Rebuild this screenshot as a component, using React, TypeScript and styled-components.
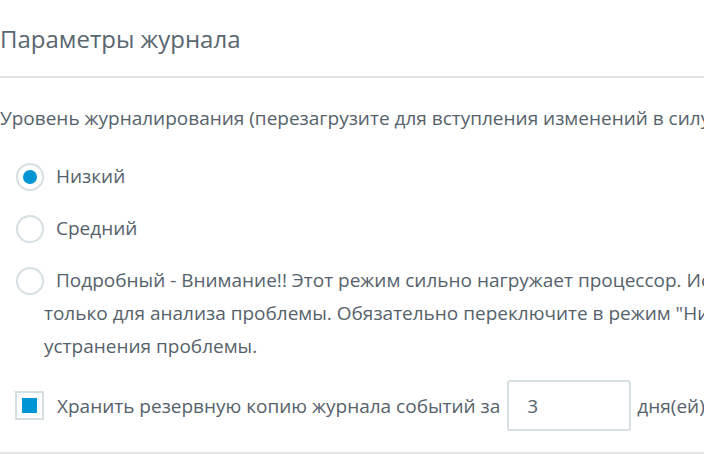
import styled, { createGlobalStyle } from "styled-components";

const GlobalStyle = createGlobalStyle`
  html, body {
    margin: 0;
    padding: 0;
    background: #ffffff;
    overflow: hidden;
  }
  body {
    font-family: "Open Sans", "Noto Sans", sans-serif;
    color: #56626b;
  }
`;

const Page = styled.div`
  width: 1000px;
`;

const Header = styled.div`
  height: 76px;
  display: flex;
  align-items: center;
  border-bottom: 2px solid #e4e4e4;
`;

const Title = styled.h1`
  margin: 0;
  font-size: 24px;
  font-weight: 400;
  color: #5a6670;
`;

const Body = styled.div`
  padding: 24px 0 0 0;
  height: 350px;
  border-bottom: 2px solid #e6e6e6;
`;

const Caption = styled.div`
  font-size: 19px;
  line-height: 32px;
  white-space: nowrap;
`;

const Options = styled.div`
  display: flex;
  flex-direction: column;
  gap: 19px;
  margin-top: 26px;
  padding-left: 16px;
`;

const Option = styled.label`
  display: flex;
  align-items: flex-start;
  gap: 12px;
  font-size: 19px;
  line-height: 33px;
`;

const Radio = styled.span<{ $checked?: boolean }>`
  flex: none;
  box-sizing: border-box;
  width: 28px;
  height: 28px;
  margin-top: 3px;
  border-radius: 50%;
  border: 2px solid #d6dfe2;
  display: flex;
  align-items: center;
  justify-content: center;

  &::after {
    content: "";
    width: 14px;
    height: 14px;
    border-radius: 50%;
    background: ${({ $checked }) => ($checked ? "#0096d6" : "transparent")};
  }
`;

const LongText = styled.span`
  margin-left: -12px;
  white-space: nowrap;
`;

const Indent = styled.span`
  padding-left: 12px;
`;

const BackupRow = styled.div`
  display: flex;
  align-items: center;
  margin-top: 17px;
  padding-left: 15px;
  font-size: 19px;
  white-space: nowrap;
`;

const Checkbox = styled.span`
  flex: none;
  box-sizing: border-box;
  width: 29px;
  height: 29px;
  border: 2px solid #d6dfe2;
  display: flex;
  align-items: center;
  justify-content: center;
  margin-right: 13px;

  &::after {
    content: "";
    width: 15px;
    height: 15px;
    background: #0096d6;
  }
`;

const DaysInput = styled.input`
  flex: none;
  box-sizing: border-box;
  width: 124px;
  height: 51px;
  margin: 0 6px 0 7px;
  padding: 0 18px;
  border: 2px solid #d6dfe2;
  border-radius: 3px;
  font-family: inherit;
  font-size: 19px;
  color: #56626b;
  outline: none;
`;

export default function App() {
  return (
    <>
      <GlobalStyle />
      <Page>
        <Header>
          <Title>Параметры журнала</Title>
        </Header>
        <Body>
          <Caption>
            Уровень журналирования (перезагрузите для вступления изменений в силу)
          </Caption>
          <Options>
            <Option>
              <Radio $checked />
              <span>Низкий</span>
            </Option>
            <Option>
              <Radio />
              <span>Средний</span>
            </Option>
            <Option>
              <Radio />
              <LongText>
                <Indent>
                  {" "}Подробный - Внимание!! Этот режим сильно нагружает процессор. Используйте его
                </Indent>
                <br />
                только для анализа проблемы. Обязательно переключите в режим "Низкий" после
                <br />
                устранения проблемы.
              </LongText>
            </Option>
          </Options>
          <BackupRow>
            <Checkbox />
            <span>Хранить резервную копию журнала событий за</span>
            <DaysInput defaultValue="3" />
            <span>дня(ей)</span>
          </BackupRow>
        </Body>
      </Page>
    </>
  );
}
